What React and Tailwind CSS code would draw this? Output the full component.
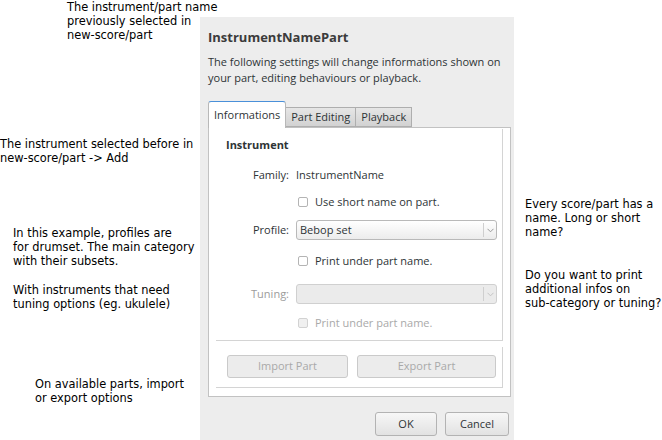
import React from 'react';

const note = "font-['DejaVu_Sans',sans-serif] text-[11.4px] leading-[14px] text-black";

const Check = ({ label, disabled }) => (
    <div className={`flex items-center gap-[7px] ${disabled ? 'text-[#a9a9a9]' : 'text-[#2e3436]'}`}>
        <span className={`w-[10px] h-[10px] rounded-[2px] border ${disabled ? 'border-[#d2d2d2] bg-[#f0f0f0]' : 'border-[#b4b4b4] bg-white'}`} />
        <span>{label}</span>
    </div>
);

const Combo = ({ value, disabled }) => (
    <div className={`h-[20px] flex items-center rounded-[3px] border ${disabled ? 'border-[#d0d0d0] bg-[#ebebeb]' : 'border-[#b9b9b9] bg-gradient-to-b from-white to-[#ececec]'}`}>
        <span className="flex-1 pl-[3px] text-[#2e3436]">{value}</span>
        <span className="h-[14px] border-l border-[#cfcfcf] w-[13px] flex items-center justify-center">
            <svg width="7" height="5" viewBox="0 0 7 5">
                <path d="M0.5 0.8 L3.5 3.8 L6.5 0.8" fill="none" stroke={disabled ? '#c4c4c4' : '#9a9a9a'} strokeWidth="1" />
            </svg>
        </span>
    </div>
);

const Tab = ({ label, active }) =>
    active ? (
        <div className="h-[27px] px-[5px] flex items-center bg-white border border-b-0 border-[#b8b8b8] border-t-[#4a90d9] rounded-t-[3px] -mb-px relative z-10 text-[#2e3436]">
            {label}
        </div>
    ) : (
        <div className="h-[20px] px-[5px] flex items-center bg-gradient-to-b from-[#e6e6e6] to-[#d2d2d2] border border-l-0 border-[#aeaeae] text-[#2e3436]">
            {label}
        </div>
    );

export default function App() {
    return (
        <div className="w-[662px] h-[440px] overflow-hidden bg-white flex">
            <div className="w-[200px] shrink-0 flex flex-col">
                <p className={`${note} ml-[67px] whitespace-nowrap`}>
                    The instrument/part name<br />previously selected in<br />new-score/part
                </p>
                <p className={`${note} mt-[95px] whitespace-nowrap`}>
                    The instrument selected before in<br />new-score/part -&gt; Add
                </p>
                <p className={`${note} ml-[13px] mt-[61px] whitespace-nowrap`}>
                    In this example, profiles are<br />for drumset. The main category<br />with their subsets.
                </p>
                <p className={`${note} ml-[13px] mt-[15px] whitespace-nowrap`}>
                    With instruments that need<br />tuning options (eg. ukulele)
                </p>
                <p className={`${note} ml-[35px] mt-[66px] whitespace-nowrap`}>
                    On available parts, import<br />or export options
                </p>
            </div>

            <div className="w-[314px] shrink-0 mt-[17px] bg-[#ededed] font-['Open_Sans',sans-serif] text-[11px] text-[#2e3436] pl-[8px] pr-[3px] flex flex-col">
                <h1 className="mt-[11px] text-[13px] font-bold leading-[18px] text-[#3b3b3b]">InstrumentNamePart</h1>
                <p className="mt-[8px] leading-[16px]">
                    The following settings will change informations shown on<br />your part, editing behaviours or playback.
                </p>

                <div className="mt-[15px] flex items-end">
                    <Tab label="Informations" active />
                    <Tab label="Part Editing" />
                    <Tab label="Playback" />
                </div>

                <div className="h-[270px] bg-white border border-[#c2c2c2] pl-[7px] pr-[7px] pt-px flex flex-col">
                    <div className="h-[212px] border-r border-b border-[#d4d4d4] pl-[10px] pt-[9px]">
                        <div className="font-bold leading-[14px]">Instrument</div>
                        <div className="mt-[14px] grid grid-cols-[63px_201px] gap-x-[7px] items-center">
                            <span className="text-right">Family:</span>
                            <span className="leading-[18px]">InstrumentName</span>
                            <span />
                            <div className="mt-[10px] h-[16px] flex items-center pl-[2px]"><Check label="Use short name on part." /></div>
                            <span className="text-right mt-[10px]">Profile:</span>
                            <div className="mt-[10px]"><Combo value="Bebop set" /></div>
                            <span />
                            <div className="mt-[13px] h-[16px] flex items-center pl-[2px]"><Check label="Print under part name." /></div>
                            <span className="text-right mt-[15px] text-[#9c9c9c]">Tuning:</span>
                            <div className="mt-[15px]"><Combo value="" disabled /></div>
                            <span />
                            <div className="mt-[11px] h-[16px] flex items-center pl-[2px]"><Check label="Print under part name." disabled /></div>
                        </div>
                    </div>
                    <div className="mt-[6px] h-[41px] border-r border-b border-[#d4d4d4] pl-[11px] pt-[8px] flex gap-[9px]">
                        <button className="w-[121px] h-[23px] rounded-[3px] border border-[#cacaca] bg-[#ececec] text-[#a9a9a9]">Import Part</button>
                        <button className="w-[139px] h-[23px] rounded-[3px] border border-[#cacaca] bg-[#ececec] text-[#a9a9a9]">Export Part</button>
                    </div>
                </div>

                <div className="mt-[15px] flex justify-end gap-[8px] pr-[2px]">
                    <button className="w-[62px] h-[24px] rounded-[3px] border border-[#b3b3b3] bg-gradient-to-b from-[#f7f7f7] to-[#e2e2e2] text-[#2e3436]">OK</button>
                    <button className="w-[64px] h-[24px] rounded-[3px] border border-[#b3b3b3] bg-gradient-to-b from-[#f7f7f7] to-[#e2e2e2] text-[#2e3436]">Cancel</button>
                </div>
            </div>

            <div className="flex-1 pl-[11px] flex flex-col">
                <p className={`${note} mt-[197px] whitespace-nowrap`}>
                    Every score/part has a<br />name. Long or short<br />name?
                </p>
                <p className={`${note} mt-[29px] whitespace-nowrap`}>
                    Do you want to print<br />additional infos on<br />sub-category or tuning?
                </p>
            </div>
        </div>
    );
}
